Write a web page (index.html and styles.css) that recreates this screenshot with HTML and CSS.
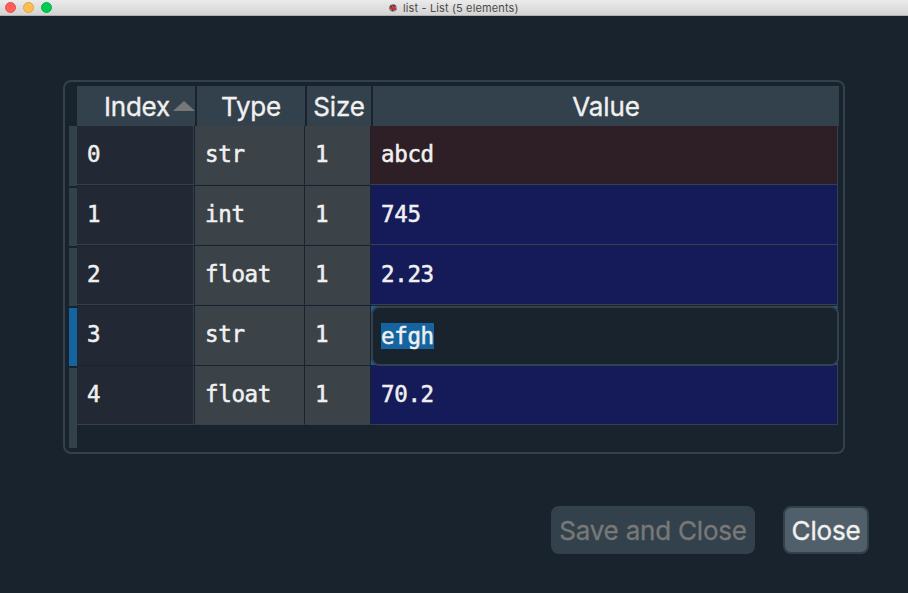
FILE: index.html
```html
<!DOCTYPE html>
<html lang="en">
<head>
<meta charset="utf-8">
<title>list - List (5 elements)</title>
<link rel="stylesheet" href="styles.css">
</head>
<body>
<header class="titlebar">
  <div class="lights"><i class="light red"></i><i class="light yellow"></i><i class="light green"></i></div>
  <div class="title">
    <svg class="logo" width="8" height="8" viewBox="0 0 8 8"><circle cx="4" cy="4" r="3.8" fill="#888"/><path d="M1.4 1.6 3 3.6M5 .8 5 3.4M3 6.9 4.2 5.2" fill="none" stroke="#333" stroke-width="1.5"/><path d="M.4 4.2 2.6 3.8 3.6 5.4 5.4 4.6 7.4 5.4M3.2 1 4.6 2.4 6.8 2" fill="none" stroke="#d81828" stroke-width="1.3"/></svg>
    <span class="caption">list - List (5 elements)</span>
  </div>
</header>
<main class="content">
  <section class="table">
    <div class="head">
      <div class="th index"><span>Index</span><svg class="sort" width="22" height="10" viewBox="0 0 22 10"><path d="M0 10 11 0 22 10Z" fill="#787878"/></svg></div>
      <div class="th"><span>Type</span></div>
      <div class="th"><span>Size</span></div>
      <div class="th"><span>Value</span></div>
    </div>
    <div class="body">
      <div class="rail"><i></i><i></i><i></i><i class="current"></i><i></i></div>
      <div class="rows">
        <div class="row"><div class="key">0</div><div class="meta">str</div><div class="meta">1</div><div class="value text">abcd</div></div>
        <div class="row"><div class="key">1</div><div class="meta">int</div><div class="meta">1</div><div class="value">745</div></div>
        <div class="row"><div class="key">2</div><div class="meta">float</div><div class="meta">1</div><div class="value">2.23</div></div>
        <div class="row"><div class="key">3</div><div class="meta">str</div><div class="meta">1</div><div class="value editing"><div class="editor"><span class="selected">efgh</span></div></div></div>
        <div class="row"><div class="key">4</div><div class="meta">float</div><div class="meta">1</div><div class="value">70.2</div></div>
      </div>
    </div>
  </section>
  <footer class="actions">
    <button class="btn save" disabled>Save and Close</button>
    <button class="btn close">Close</button>
  </footer>
</main>
</body>
</html>
```
FILE: styles.css
```css
* { box-sizing: border-box; }
body {
  margin: 0;
  height: 593px;
  overflow: hidden;
  background: #19232d;
  color: #f0f0f0;
  font-family: Inter, "Liberation Sans", sans-serif;
}
.titlebar {
  display: grid;
  grid-template-columns: 1fr auto 1fr;
  align-items: center;
  height: 16px;
  background: linear-gradient(#ebebeb, #d3d3d3);
  border-bottom: 1px solid #b0b0b0;
}
.lights { display: flex; gap: 7px; padding-left: 5px; }
.light { width: 11px; height: 11px; border-radius: 50%; border: 1px solid; }
.red { background: #ff5f5c; border-color: #e5504e; }
.yellow { background: #ffbe4f; border-color: #e0a440; }
.green { background: #00cb55; border-color: #00b548; }
.title { display: flex; align-items: center; gap: 6px; }
.caption { padding-top: 2px; font-size: 11px; line-height: 13px; color: #4a4a4a; width: 116px; white-space: nowrap; letter-spacing: 0.13px; }
.content { padding: 64px 39px 0 63px; }
.table {
  width: 782px;
  height: 374px;
  padding: 4px;
  border: 2px solid #32414b;
  border-radius: 8px;
}
.head {
  display: grid;
  grid-template-columns: 118px 108px 64px 466px;
  gap: 2px;
  height: 40px;
  padding-left: 8px;
}
.th {
  display: flex;
  align-items: center;
  justify-content: center;
  background: #32414b;
  font-size: 26px;
  line-height: 38px;
  letter-spacing: -0.15px;
  -webkit-text-stroke: 0.35px currentColor;
}
.th span { padding-top: 2px; }
.th.index { justify-content: flex-end; gap: 3px; letter-spacing: -0.2px; }
.sort { margin-bottom: 1px; }
.body { display: flex; }
.rail { display: flex; flex-direction: column; gap: 2px; width: 8px; }
.rail i { height: 58px; background: #32414b; }
.rail i:first-child { height: 60px; }
.rail i:last-child { height: 80px; }
.rail .current { background: #1464a0; }
.row {
  display: grid;
  grid-template-columns: 117px 110px 66px 468px;
  height: 60px;
  font: 22.5px/57px "DejaVu Sans Mono", "Liberation Mono", monospace;
  letter-spacing: -0.35px;
  -webkit-text-stroke: 0.5px currentColor;
}
.row:first-child { height: 59px; }
.row > div { border-bottom: 1px solid #32414b; white-space: pre; }
.key { padding-left: 10px; background: #232934; border-right: 1px solid #32414b; }
.meta { padding-left: 10px; background: #3b4248; border-left: 1px solid #19232d; }
.value { padding-left: 10px; background: #141b58; border-left: 1px solid #19232d; border-right: 1px solid #32414b; }
.row .key, .row .meta { border-top: 1px solid #19232d; }
.row .value { padding-top: 1px; }
.row:first-child .key, .row:first-child .meta { border-top: 0; }
.row:first-child .value { padding-top: 0; }
.value.text { background: #2e1e26; }
.row .editing { padding: 0; border-top: 1px solid #19232d; background: #1464a0; }
.editor {
  width: 468px;
  height: 60px;
  position: relative;
  padding: 0 8px;
  border: 2px solid #32414b;
  border-radius: 8px;
  background: #19232d;
}
.selected { background: #1464a0; }
.actions { display: flex; justify-content: flex-end; gap: 28px; margin-top: 52px; }
.btn {
  height: 48px;
  padding: 2px 0 0;
  border: 2px solid #32414b;
  border-radius: 8px;
  font: 26px/42px Inter, "Liberation Sans", sans-serif;
  letter-spacing: -0.2px;
  -webkit-text-stroke: 0.35px currentColor;
  white-space: nowrap;
}
.save { width: 204px; background: #32414b; color: #787878; }
.close { width: 86px; background: #505f69; color: #f0f0f0; }
```
